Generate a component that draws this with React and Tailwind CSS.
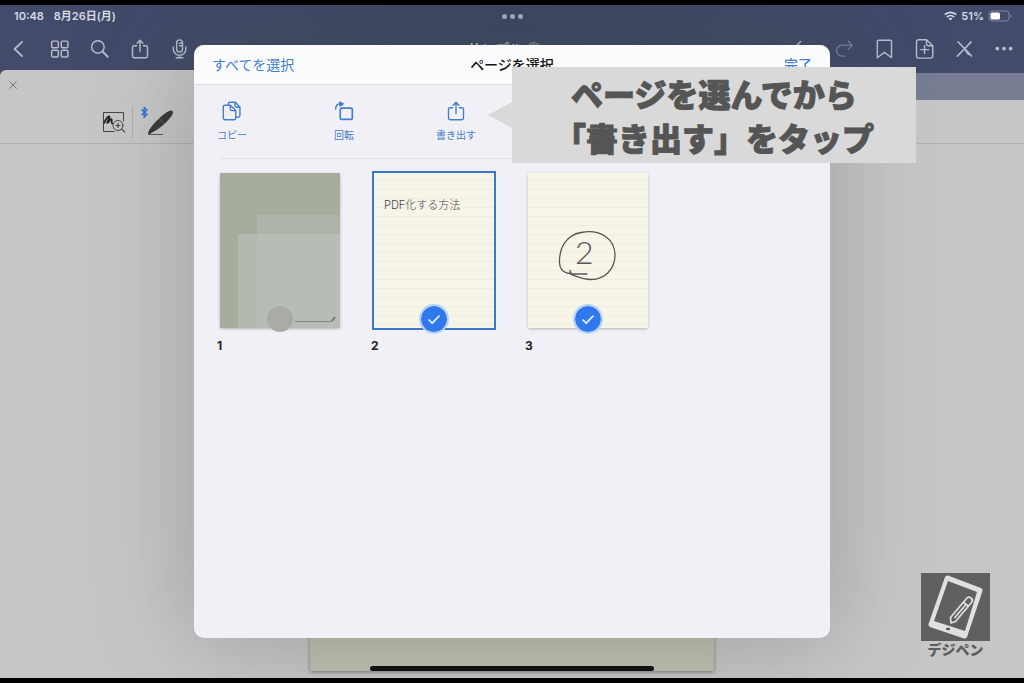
import React from "react";

const stroke = {
  fill: "none",
  stroke: "currentColor",
  strokeWidth: 1.7,
  strokeLinecap: "round",
  strokeLinejoin: "round",
};

function Icon({ className, children, viewBox = "0 0 24 24" }) {
  return (
    <svg viewBox={viewBox} className={className} aria-hidden="true" {...stroke}>
      {children}
    </svg>
  );
}

function ShareShape() {
  return (
    <>
      <path d="M8 8H5a2 2 0 0 0-2 2v10.500a2 2 0 0 0 2 2h14a2 2 0 0 0 2-2V10a2 2 0 0 0-2-2h-3" />
      <path d="M12 15V1.500M8.500 5 12 1.500 15.500 5" />
    </>
  );
}

const leftTools = [
  { label: "戻る", shape: <path d="M14.500 3.500 5.500 12l9 8.500" strokeWidth="2.100" /> },
  {
    label: "サムネイル",
    shape: (
      <>
        <rect x="2" y="2.500" width="8" height="8" rx="1.500" />
        <rect x="13.500" y="2.500" width="8" height="8" rx="1.500" />
        <rect x="2" y="13.500" width="8" height="8" rx="1.500" />
        <rect x="13.500" y="13.500" width="8" height="8" rx="1.500" />
      </>
    ),
  },
  {
    label: "検索",
    shape: (
      <>
        <circle cx="9.500" cy="9.500" r="7.500" />
        <path d="m15 15 6.300 6.300" strokeWidth="2.200" />
      </>
    ),
  },
  { label: "共有", shape: <ShareShape /> },
  {
    label: "録音",
    shape: (
      <>
        <rect x="8" y="1" width="7" height="14.500" rx="3.500" />
        <path d="M4 9.500V12a7.500 7.500 0 0 0 15 0V9.500M11.500 19.500v3M7.500 22.500h8M11.500 5H15M11.500 8H15" />
      </>
    ),
  },
];

const rightTools = [
  { label: "取り消す", shape: <path d="m8 3-5 5 5 5M3 8h12a6 6 0 0 1 0 12H9" /> },
  { label: "やり直す", dim: true, shape: <path d="m17 2.500 5 5-5 5M22 7.500H9.500a6.500 6.500 0 0 0 0 13H13" /> },
  { label: "ブックマーク", shape: <path d="M5 1.500h15a1 1 0 0 1 1 1V22.500l-8.500-6.500L4 22.500V2.500a1 1 0 0 1 1-1z" /> },
  {
    label: "ページを追加",
    shape: (
      <>
        <path d="M15 .9H5.500a2.500 2.500 0 0 0-2.500 2.500v17a2.500 2.500 0 0 0 2.500 2.500h14.500a2.500 2.500 0 0 0 2.500-2.500V8zM15 1v5a2 2 0 0 0 2 2h5" />
        <path d="M12.700 8v9.500M8 12.700h9.500" />
      </>
    ),
  },
  { label: "閲覧モード", shape: <path d="m5 3.500 7.500 8M20.500 3.500l-8 8.500L4 20.500M12.500 11l8.500 9.500M14 14.500l3.500 4" strokeWidth="1.900" /> },
  {
    label: "その他",
    shape: (
      <g fill="currentColor" stroke="none">
        <circle cx="4" cy="11.500" r="2.300" />
        <circle cx="12" cy="11.500" r="2.300" />
        <circle cx="20" cy="11.500" r="2.300" />
      </g>
    ),
  },
];

function ToolGroup({ tools }) {
  return (
    <div className="flex">
      {tools.map((t) => (
        <button
          key={t.label}
          type="button"
          aria-label={t.label}
          className={`flex w-10 items-center justify-center ${t.dim ? "text-[#717995]" : "text-[#b9bdcb]"}`}
        >
          <Icon className="size-5">{t.shape}</Icon>
        </button>
      ))}
    </div>
  );
}

function StatusBar() {
  return (
    <div className="grid h-[22px] grid-cols-3 items-center pr-3 pl-3.5 text-[11px] font-semibold text-[#d7dae4]">
      <div className="flex gap-2.5">
        <span>10:48</span>
        <span>8月26日(月)</span>
      </div>
      <div className="flex justify-center gap-[3px]">
        <i className="size-[5px] rounded-full bg-[#a9aebf]" />
        <i className="size-[5px] rounded-full bg-[#a9aebf]" />
        <i className="size-[5px] rounded-full bg-[#a9aebf]" />
      </div>
      <div className="flex items-center justify-end gap-1">
        <svg viewBox="0 0 24 18" className="h-[10px] w-[13px]" fill="none" stroke="currentColor" strokeWidth="3.400" aria-hidden="true">
          <path d="M1.500 6.500a15 15 0 0 1 21 0M5.500 11a9.300 9.300 0 0 1 13 0" />
          <path d="m12 17.500-3.500-3.700a5 5 0 0 1 7 0z" fill="currentColor" stroke="none" />
        </svg>
        <span>51%</span>
        <svg viewBox="0 0 24 12" className="h-3 w-6" aria-label="バッテリー">
          <rect x="1" y="1" width="20" height="10" rx="3" fill="none" stroke="#7f869c" />
          <rect x="2.500" y="2.500" width="9.500" height="7" rx="1.500" fill="#fff" />
          <path d="M22.500 4.200v3.600c1.400-.6 1.400-3 0-3.600z" fill="#7f869c" />
        </svg>
      </div>
    </div>
  );
}

function PenTools() {
  return (
    <div className="flex h-[44px] items-center border-b border-[#b2b2b2] bg-[#c6c6c6] pl-[102px]">
      <button type="button" aria-label="ズーム">
        <svg viewBox="0 0 24 24" className="size-6" fill="none" stroke="#444" strokeLinecap="round" aria-hidden="true">
          <path d="M12 21.500H1.500v-19h20V11" strokeWidth="1" />
          <path d="M2 13C4 9 6.500 5.500 7.500 6.500S4 13 5.300 13s3-4.500 4.200-3.800-1 4.300 1 4.300" stroke="#222" strokeWidth="1.700" />
          <circle cx="16" cy="15.500" r="5" />
          <path d="m19.700 19.200 3 3M14 15.500h4M16 13.500v4" strokeWidth="1.200" />
        </svg>
      </button>
      <span className="mx-1.5 h-8 w-px bg-[#b0b0b0]" />
      <button type="button" aria-label="ペン">
        <svg viewBox="0 0 36 30" className="h-[30px] w-9" fill="none" aria-hidden="true">
          <path d="m2.500 2.500 5.500 5-2.800 2.700V.5L8 3 2.500 8" stroke="#2f6fd0" strokeWidth="1.400" />
          <path d="M9 27.500c0-3 1.500-5.500 4-8.500 5-6 11-12 17-15 2-1 4-.5 4 1 0 2-1 3.500-3 6-4 5-10 10-15 13-3 1.500-5 3-7 3.500z" fill="#383838" />
          <path d="m20 11.500 5 4.500" stroke="#666" strokeWidth=".8" />
          <path d="M9 27.500h15" stroke="#555" />
        </svg>
      </button>
    </div>
  );
}

const actions = [
  {
    label: "コピー",
    shape: (
      <>
        <path d="M7.500 4.500v-1a2 2 0 0 1 2-2H16l5.500 6v10a2 2 0 0 1-2 2H17" />
        <path d="M3.500 5H10l6.500 6.500V20a2.500 2.500 0 0 1-2.500 2.500H4A2.500 2.500 0 0 1 1.500 20V7a2 2 0 0 1 2-2zM10 5v4.500a2 2 0 0 0 2 2h4.500M15.500 2v3.500a2 2 0 0 0 2 2h4" />
      </>
    ),
  },
  {
    label: "回転",
    shape: (
      <>
        <rect x="7.500" y="8.500" width="14.500" height="13.500" rx="2" strokeWidth="2" />
        <path d="M2 9.500c0-4 2-6 5.500-6.200" />
        <path d="M7 1.300 11 3.500 7.300 6z" fill="currentColor" />
      </>
    ),
  },
  { label: "書き出す", shape: <ShareShape /> },
];

function PageThumb({ number, selected, active, children }) {
  return (
    <label className="flex flex-col gap-1.5">
      <span
        className={`relative block ${
          active ? "outline-2 outline-[#3a76cc]" : "rounded-xs shadow-[0_1px_3px_rgba(0,0,0,0.25)]"
        }`}
      >
        <span className="block h-[155px] overflow-hidden">{children}</span>
        <span className="absolute inset-x-0 -bottom-1 flex justify-center">
          <input type="checkbox" defaultChecked={selected} className="peer size-[26px] appearance-none rounded-full bg-[#a9aba7] checked:bg-[#2f78ee] checked:outline-2 checked:outline-[#b5d3f8]" />
          <svg viewBox="0 0 26 26" className="pointer-events-none absolute hidden size-[26px] peer-checked:block" fill="none" stroke="#e3eeff" strokeWidth="1.700" aria-hidden="true">
            <path d="m7.500 13.500 3.700 3.700 7.300-7.500" />
          </svg>
        </span>
      </span>
      <span className="-ml-[3px] text-[12px] leading-6 font-bold text-[#222]">{number}</span>
    </label>
  );
}

const ruled = "relative h-full bg-[#f7f5e8] bg-[linear-gradient(#efede2_1px,transparent_1px)] bg-[length:100%_9px] bg-[position:0_16px]";

function PageDialog() {
  return (
    <section
      role="dialog"
      aria-label="ページを選択"
      className="absolute inset-x-[18.950%] top-10 bottom-10 flex flex-col overflow-hidden rounded-[10px] bg-[#f1f0f7] shadow-[0_0_100px_rgba(60,80,70,0.32)]"
    >
      <header className="grid h-10 grid-cols-3 items-center border-b border-[#dedee2] bg-[#fcfcfe] px-[18px] text-[14px] text-[#4380cb]">
        <button type="button" className="justify-self-start">すべてを選択</button>
        <h1 className="text-center font-medium text-[#111]">ページを選択</h1>
        <button type="button" className="justify-self-end font-medium">完了</button>
      </header>
      <div className="mx-[26px] flex h-[74px] items-start border-b border-[#dfdfe5] pt-3.5">
        {actions.map((a) => (
          <div key={a.label} className="w-28">
            <button type="button" className="-ml-[18px] flex w-[60px] flex-col items-center gap-0.5 text-[#4380cb]">
              <Icon className="size-6 p-0.5">{a.shape}</Icon>
              <span className="text-[10px] leading-5">{a.label}</span>
            </button>
          </div>
        ))}
      </div>
      <div className="mx-[26px] mt-3.5 grid grid-cols-[repeat(auto-fill,120px)] gap-x-[34px]">
        <PageThumb number="1">
          <span className="relative block h-full bg-[#a7ad9e]">
            <span className="absolute top-[42px] right-0 bottom-0 left-[37px] bg-[#aeb4a8]" />
            <span className="absolute top-[61px] right-0 bottom-0 left-[18px] bg-[#b2b9af]" />
            <span className="absolute top-[61px] right-0 bottom-0 left-[37px] bg-[#b6bdb4]" />
            <svg viewBox="0 0 42 8" className="absolute right-[3px] bottom-[4px] h-2 w-[42px]" fill="none" stroke="#858b82" aria-hidden="true">
              <path d="M0 5.500h37" />
              <path d="m37 5 3-4" stroke="#666" strokeWidth="1.500" />
            </svg>
          </span>
        </PageThumb>
        <PageThumb number="2" selected active>
          <span className={`${ruled} block px-2.5 pt-[22px] text-[11px] leading-5 font-light whitespace-nowrap text-[#444]`}>PDF化する方法</span>
        </PageThumb>
        <PageThumb number="3" selected>
          <span className={`${ruled} block`}>
            <svg viewBox="0 0 120 155" className="h-full w-full" fill="none" stroke="#555" strokeWidth="1.300" strokeLinecap="round" strokeLinejoin="round" aria-hidden="true">
              <path d="M59 101H45l-6-1c-4-1-7-4-7.500-10C31 74 39 62 53 59.500c20-4 34 7 34 22.500 0 14-10 24.500-24 24.500-8 0-14-3-20-5l-1-4 1 3" />
              <text x="47" y="91" fontSize="32" fontWeight="300" fontFamily="Lato, sans-serif" fill="#555" stroke="none">2</text>
            </svg>
          </span>
        </PageThumb>
      </div>
    </section>
  );
}

function Callout() {
  return (
    <aside className="absolute top-[62px] right-[108px] left-1/2 flex flex-col items-center bg-[#d9d9d9] pt-[7px] pb-px text-[32px] leading-[44px] font-black whitespace-nowrap text-[#555] [-webkit-text-stroke:1px_#555]">
      <svg viewBox="0 0 24 26" className="absolute top-[35px] -left-6 h-[26px] w-6" aria-hidden="true">
        <path d="M24 0v26L0 13z" fill="#d9d9d9" />
      </svg>
      <p>ページを選んでから</p>
      <p>「書き出す」をタップ</p>
    </aside>
  );
}

function Brand() {
  return (
    <div className="absolute right-[34px] bottom-5 flex flex-col items-center text-[14px] leading-[17px] font-black text-[#5c5c5c]">
      <svg viewBox="0 0 69 68" className="h-[68px] w-[69px] bg-[#606060]" fill="none" aria-hidden="true">
        <path fillRule="evenodd" d="M27 2.500 60 15q2 1 1.500 3L46 64q-1 2-3 1.500L9 54q-2-1-1.500-3L24 4q1-2 3-1.500zM27 8 13 48l31 10L56 19z" fill="#e0e0e0" />
        <path d="m29.500 44.500 16-19a3 3 0 0 1 5 4L34.500 48.500l-4.500 1.500zM42 29l5 4M33.500 45 45 31.500" stroke="#e0e0e0" strokeWidth="1.700" strokeLinejoin="round" />
        <ellipse cx="27" cy="56" rx="2.200" ry="1.300" fill="#555" />
      </svg>
      <span>デジペン</span>
    </div>
  );
}

export default function App() {
  return (
    <div className="flex min-h-screen flex-col bg-black py-[5px] font-['Inter','Noto_Sans_CJK_JP',sans-serif]">
      <div className="relative flex flex-1 flex-col overflow-hidden bg-[#c6c6c6]">
        <div className="bg-linear-to-r from-[#434b6b] via-[#3c4560] to-[#434b6b]">
          <StatusBar />
          <nav className="grid h-[43px] grid-cols-[1fr_auto_1fr]">
            <ToolGroup tools={leftTools} />
            <div className="self-center pr-4 text-[14px] font-medium text-[#c5c9d5]">サンプル ◎</div>
            <div className="flex justify-end">
              <ToolGroup tools={rightTools} />
            </div>
          </nav>
          <div className="flex h-[30px]">
            <div className="flex flex-1 items-center rounded-tl-md bg-[#c6c6c6] pl-[9px]">
              <button type="button" aria-label="タブを閉じる">
                <Icon className="size-2 text-[#777]">
                  <path d="m2 2 20 20M22 2 2 22" strokeWidth="3" />
                </Icon>
              </button>
            </div>
            <div className="mt-[3px] flex-1 bg-[#767d92]" />
          </div>
        </div>
        <PenTools />
        <main className="flex flex-1 justify-center pb-[7px]">
          <div className="w-[39.500%] bg-[#bdbfae] shadow-[0_1px_4px_rgba(0,0,0,0.4)]" />
        </main>
        <PageDialog />
        <div className="absolute inset-x-[36.100%] bottom-[7px] h-[5px] rounded-full bg-[#111]" />
        <Callout />
        <Brand />
      </div>
    </div>
  );
}
